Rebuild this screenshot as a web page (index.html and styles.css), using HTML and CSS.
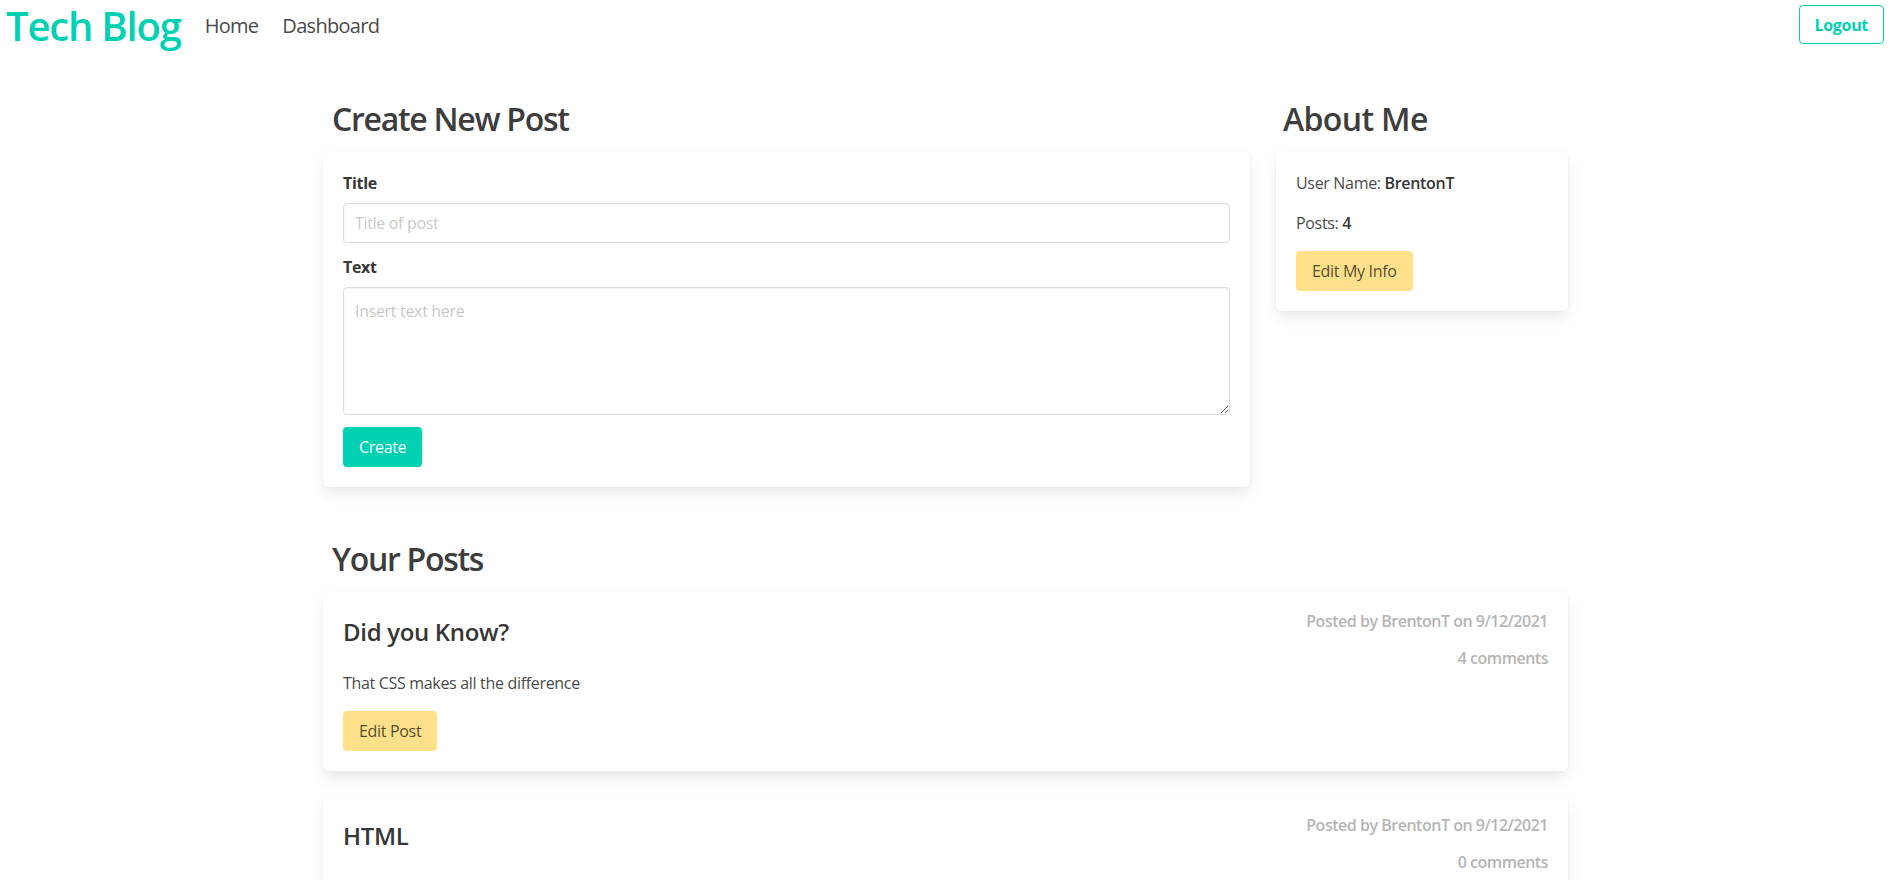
FILE: index.html
```html
<!DOCTYPE html>
<html lang="en">
<head>
<meta charset="utf-8">
<title>Tech Blog - Dashboard</title>
<link rel="stylesheet" href="styles.css">
</head>
<body>
<nav class="navbar">
  <a class="brand" href="#">Tech Blog</a>
  <div class="nav-start">
    <a class="nav-link" href="#">Home</a>
    <a class="nav-link" href="#">Dashboard</a>
  </div>
  <div class="nav-end">
    <a class="btn btn-outline" href="#">Logout</a>
  </div>
</nav>

<main class="page">
  <div class="top-grid">
    <section class="col-main">
      <h2 class="section-title">Create New Post</h2>
      <form class="box">
        <div class="field">
          <label class="label">Title</label>
          <input class="input" type="text" placeholder="Title of post">
        </div>
        <div class="field">
          <label class="label">Text</label>
          <textarea class="textarea" placeholder="Insert text here"></textarea>
        </div>
        <button class="btn btn-primary" type="button">Create</button>
      </form>
    </section>

    <aside class="col-side">
      <h2 class="section-title">About Me</h2>
      <div class="box about">
        <p>User Name: <strong>BrentonT</strong></p>
        <p>Posts: <strong>4</strong></p>
        <button class="btn btn-warning" type="button">Edit My Info</button>
      </div>
    </aside>
  </div>

  <section class="posts">
    <h2 class="section-title">Your Posts</h2>

    <article class="box post">
      <div class="post-main">
        <h3 class="post-title">Did you Know?</h3>
        <p class="post-body">That CSS makes all the difference</p>
        <button class="btn btn-warning" type="button">Edit Post</button>
      </div>
      <div class="post-meta">
        <p>Posted by BrentonT on 9/12/2021</p>
        <p class="comments">4 comments</p>
      </div>
    </article>

    <article class="box post post-last">
      <div class="post-main">
        <h3 class="post-title">HTML</h3>
      </div>
      <div class="post-meta">
        <p>Posted by BrentonT on 9/12/2021</p>
        <p class="comments">0 comments</p>
      </div>
    </article>
  </section>
</main>
</body>
</html>
```

FILE: styles.css
```css
* {
  box-sizing: border-box;
}

html, body {
  margin: 0;
  padding: 0;
  background: #ffffff;
}

body {
  font-family: "Open Sans", "Noto Sans", sans-serif;
  font-size: 16px;
  line-height: 1.5;
  color: #4a4a4a;
  letter-spacing: -0.02em;
}

a {
  text-decoration: none;
}

/* ---------- Navbar ---------- */
.navbar {
  display: flex;
  align-items: center;
  height: 52px;
  padding: 0 14px 0 6px;
}

.brand {
  font-size: 40px;
  line-height: 40px;
  font-weight: 600;
  color: #00d1b2;
  letter-spacing: -0.03em;
}

.nav-start {
  display: flex;
  gap: 24px;
  margin-left: 24px;
}

.nav-link {
  font-size: 20px;
  line-height: 30px;
  color: #4a4a4a;
  letter-spacing: -0.035em;
}

.nav-end {
  margin-left: auto;
  align-self: flex-start;
  padding-top: 5px;
}

/* ---------- Buttons ---------- */
.btn {
  display: inline-flex;
  align-items: center;
  justify-content: center;
  height: 40px;
  padding: 0 15px;
  border: 1px solid transparent;
  border-radius: 4px;
  font-family: inherit;
  font-size: 16px;
  letter-spacing: -0.02em;
  cursor: pointer;
}

.btn-outline {
  height: 39px;
  border-color: #00d1b2;
  color: #00d1b2;
  background: #fff;
  font-weight: 700;
}

.btn-primary {
  background: #00d1b2;
  color: #fff;
}

.btn-warning {
  background: #ffe08a;
  color: rgba(0, 0, 0, 0.7);
}

/* ---------- Page ---------- */
.page {
  width: 1252px;
  margin: 0 auto;
  padding: 49px 7px 40px 0;
}

.top-grid {
  display: grid;
  grid-template-columns: 927px 292px;
  column-gap: 26px;
  align-items: start;
}

.section-title {
  margin: 0 0 14px;
  padding-left: 9px;
  font-size: 32px;
  line-height: 36px;
  font-weight: 600;
  color: #3d3d3d;
  letter-spacing: -0.04em;
}

.col-side .section-title {
  padding-left: 7px;
  letter-spacing: -0.02em;
}

.box {
  display: block;
  background: #fff;
  border-radius: 6px;
  padding: 20px;
  box-shadow: 0 0.5em 1em -0.125em rgba(10, 10, 10, 0.1),
              0 0 0 1px rgba(10, 10, 10, 0.02);
}

/* ---------- Form ---------- */
.field {
  margin-bottom: 12px;
}

.label {
  display: block;
  margin-bottom: 8px;
  font-size: 16px;
  line-height: 24px;
  font-weight: 700;
  color: #363636;
}

.input,
.textarea {
  display: block;
  width: 100%;
  border: 1px solid #dbdbdb;
  border-radius: 4px;
  background: #fff;
  font-family: inherit;
  font-size: 16px;
  letter-spacing: -0.02em;
  color: #363636;
  box-shadow: inset 0 0.0625em 0.125em rgba(10, 10, 10, 0.05);
}

.input {
  height: 40px;
  padding: 0 11px;
  line-height: 24px;
}

.textarea {
  height: 128px;
  padding: 11px;
  line-height: 24px;
  resize: vertical;
}

.input::placeholder,
.textarea::placeholder {
  color: rgba(54, 54, 54, 0.3);
}

/* ---------- About ---------- */
.about p {
  margin: 0 0 16px;
  line-height: 24px;
}

.about strong {
  font-weight: 600;
  color: #363636;
}

/* ---------- Posts ---------- */
.posts {
  margin-top: 54px;
}

.post {
  display: flex;
  justify-content: space-between;
  align-items: flex-start;
  margin-bottom: 24px;
}

.post-last {
  padding-bottom: 40px;
}

.post-title {
  margin: 7px 0 26px;
  font-size: 24px;
  line-height: 27px;
  font-weight: 600;
  color: #363636;
}

.post-body {
  margin: 0 0 16px;
  line-height: 24px;
}

.post-meta {
  margin-top: -2px;
  text-align: right;
  color: #b5b5b5;
  font-weight: 600;
  letter-spacing: -0.03em;
}

.post-meta p {
  margin: 0;
  line-height: 24px;
}

.post-meta .comments {
  margin-top: 13px;
}
```
